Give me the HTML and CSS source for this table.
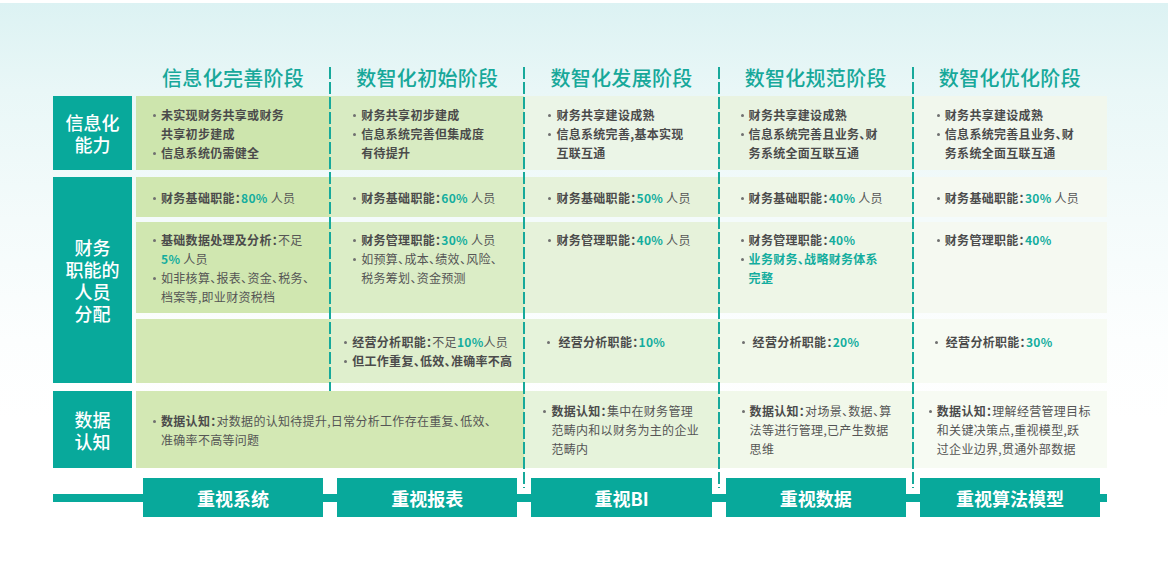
FILE: index.html
```html
<!DOCTYPE html>
<html lang="zh-CN">
<head>
<meta charset="utf-8">
<title>数智化阶段</title>
<link rel="stylesheet" href="styles.css">
</head>
<body>
<div class="page">
  <div class="board">
    <div class="hd c1">信息化完善阶段</div>
    <div class="hd c2">数智化初始阶段</div>
    <div class="hd c3">数智化发展阶段</div>
    <div class="hd c4">数智化规范阶段</div>
    <div class="hd c5">数智化优化阶段</div>

    <div class="lab r1">信息化<br>能力</div>
    <div class="lab r2">财务<br>职能的<br>人员<br>分配</div>
    <div class="lab r3">数据<br>认知</div>

    <!-- row 1 -->
    <div class="cell r1 c1 mid strong">
      <p class="it"><span>未实现财务共享或财务<br>共享初步建成</span></p>
      <p class="it"><span>信息系统仍需健全</span></p>
    </div>
    <div class="cell r1 c2 mid strong">
      <p class="it"><span>财务共享初步建成</span></p>
      <p class="it"><span>信息系统完善但集成度<br>有待提升</span></p>
    </div>
    <div class="cell r1 c3 mid strong">
      <p class="it"><span>财务共享建设成熟</span></p>
      <p class="it"><span>信息系统完善,基本实现<br>互联互通</span></p>
    </div>
    <div class="cell r1 c4 mid strong">
      <p class="it"><span>财务共享建设成熟</span></p>
      <p class="it"><span>信息系统完善且业务、财<br>务系统全面互联互通</span></p>
    </div>
    <div class="cell r1 c5 mid strong">
      <p class="it"><span>财务共享建设成熟</span></p>
      <p class="it"><span>信息系统完善且业务、财<br>务系统全面互联互通</span></p>
    </div>

    <!-- row 2a -->
    <div class="cell r2a c1 mid"><p class="it"><span><b>财务基础职能：</b><em>80%</em> 人员</span></p></div>
    <div class="cell r2a c2 mid"><p class="it"><span><b>财务基础职能：</b><em>60%</em> 人员</span></p></div>
    <div class="cell r2a c3 mid"><p class="it"><span><b>财务基础职能：</b><em>50%</em> 人员</span></p></div>
    <div class="cell r2a c4 mid"><p class="it"><span><b>财务基础职能：</b><em>40%</em> 人员</span></p></div>
    <div class="cell r2a c5 mid"><p class="it"><span><b>财务基础职能：</b><em>30%</em> 人员</span></p></div>

    <!-- row 2b -->
    <div class="cell r2b c1 top8">
      <p class="it"><span><b>基础数据处理及分析：</b>不足<br><em>5%</em> 人员</span></p>
      <p class="it"><span>如非核算、报表、资金、税务、<br>档案等,即业财资税档</span></p>
    </div>
    <div class="cell r2b c2 top8">
      <p class="it"><span><b>财务管理职能：</b><em>30%</em> 人员</span></p>
      <p class="it"><span>如预算、成本、绩效、风险、<br>税务筹划、资金预测</span></p>
    </div>
    <div class="cell r2b c3 top8">
      <p class="it"><span><b>财务管理职能：</b><em>40%</em> 人员</span></p>
    </div>
    <div class="cell r2b c4 top8">
      <p class="it"><span><b>财务管理职能：</b><em>40%</em></span></p>
      <p class="it"><span><em>业务财务、战略财务体系<br>完整</em></span></p>
    </div>
    <div class="cell r2b c5 top8">
      <p class="it"><span><b>财务管理职能：</b><em>40%</em></span></p>
    </div>

    <!-- row 2c -->
    <div class="cell r2c c1"></div>
    <div class="cell r2c c2 top13 pl14">
      <p class="it"><span><b>经营分析职能：</b>不足<em>10%</em>人员</span></p>
      <p class="it"><span><b>但工作重复、低效、准确率不高</b></span></p>
    </div>
    <div class="cell r2c c3 top13 wide"><p class="it"><span><b>经营分析职能：</b><em>10%</em></span></p></div>
    <div class="cell r2c c4 top13 wide"><p class="it"><span><b>经营分析职能：</b><em>20%</em></span></p></div>
    <div class="cell r2c c5 top13 wide"><p class="it"><span><b>经营分析职能：</b><em>30%</em></span></p></div>

    <!-- row 3 -->
    <div class="cell r3 m12 mid">
      <p class="it"><span><b>数据认知：</b>对数据的认知待提升,日常分析工作存在重复、低效、<br>准确率不高等问题</span></p>
    </div>
    <div class="cell r3 c3 mid pl19">
      <p class="it"><span><b>数据认知：</b>集中在财务管理<br>范畴内和以财务为主的企业<br>范畴内</span></p>
    </div>
    <div class="cell r3 c4 mid pl23">
      <p class="it"><span><b>数据认知：</b>对场景、数据、算<br>法等进行管理,已产生数据<br>思维</span></p>
    </div>
    <div class="cell r3 c5 mid pl16">
      <p class="it"><span><b>数据认知：</b>理解经营管理目标<br>和关键决策点,重视模型,跃<br>过企业边界,贯通外部数据</span></p>
    </div>

    <!-- dashed dividers -->
    <div class="dl x2 short"></div>
    <div class="dl x3"></div>
    <div class="dl x4"></div>
    <div class="dl x5"></div>

    <!-- bottom -->
    <div class="bar"></div>
    <div class="btn c1">重视系统</div>
    <div class="btn c2">重视报表</div>
    <div class="btn c3">重视BI</div>
    <div class="btn c4">重视数据</div>
    <div class="btn c5">重视算法模型</div>
  </div>
</div>
</body>
</html>
```

FILE: styles.css
```css
* { box-sizing: border-box; }
html, body { margin: 0; padding: 0; }
body {
  width: 1168px;
  height: 572px;
  overflow: hidden;
  font-family: "Noto Sans CJK SC", "Noto Sans", sans-serif;
  background: #fff;
}
.page {
  width: 1168px;
  height: 572px;
  padding: 58px 0 0 53px;
  background: linear-gradient(to bottom, #fff 0, #fff 3px, #dcf2f3 3px, #e9f7f7 90px, #f4fbfb 220px, #fcfefe 340px, #fff 420px);
}
.board {
  display: grid;
  width: 1054px;
  grid-template-columns: 79px 4px repeat(5, 1fr);
  grid-template-rows: 38px 74px 7px 40px 5px 91px 6px 64px 8px 77px 10px 39px;
}

/* column / row placement */
.c1 { grid-column: 3; }
.c2 { grid-column: 4; }
.c3 { grid-column: 5; }
.c4 { grid-column: 6; }
.c5 { grid-column: 7; }
.m12 { grid-column: 3 / 5; }
.r1 { grid-row: 2; }
.r2a { grid-row: 4; }
.r2b { grid-row: 6; }
.r2c { grid-row: 8; }
.r3 { grid-row: 10; }

/* headers */
.hd {
  grid-row: 1;
  display: flex;
  align-items: center;
  justify-content: center;
  font-size: 20px;
  font-weight: 500;
  letter-spacing: 0.3px;
  color: #17a89a;
}

/* left labels */
.lab {
  grid-column: 1;
  background: #08a99b;
  color: #fff;
  font-size: 18px;
  font-weight: 500;
  line-height: 22px;
  display: flex;
  align-items: center;
  justify-content: center;
  text-align: center;
}
.lab.r2 { grid-row: 4 / 9; }

/* content cells */
.cell {
  display: flex;
  flex-direction: column;
  font-size: 12px;
  line-height: 19px;
  letter-spacing: 0.3px;
  color: #555;
  white-space: nowrap;
  font-feature-settings: "halt";
}
.cell p { margin: 0; }
.mid { justify-content: center; }
.top8 { padding-top: 8px; }
.top13 { padding-top: 13px; }

.cell.c1 { background: #d0e7b0; padding-left: 17px; }
.cell.c2 { background: #dbedc6; padding-left: 23px; }
.cell.c3 { background: #e6f2da; padding-left: 24px; }
.cell.c4 { background: #eef6e7; padding-left: 22px; }
.cell.c5 { background: #f5f9f1; padding-left: 24px; }

.cell.r1.c1 { background: #cde5ad; }
.cell.r1.c2 { background: #d8ebc2; }
.cell.r1.c3 { background: #ebf5e7; }
.cell.r1.c4 { background: #e9f3e1; }
.cell.r1.c5 { background: #f1f7ed; }

.cell.r2c.c1, .cell.m12 { background: #d3e8b4; }
.cell.r2c.c2 { background: #dfefcd; }
.cell.r2c.c3, .cell.r3.c3 { background: #e6f3db; }
.cell.r2c.c4, .cell.r3.c4 { background: #f1f8ea; }
.cell.r2c.c5, .cell.r3.c5 { background: #f7fbf3; }

.cell.m12 { padding-left: 17px; }
.cell.pl14 { padding-left: 14px; }
.cell.pl16 { padding-left: 16px; }
.cell.pl19 { padding-left: 19px; }
.cell.pl23 { padding-left: 23px; }
.cell.wide { padding-left: 23px; }
.cell.wide.c5 { padding-left: 22px; }

.it {
  display: flex;
  align-items: flex-start;
}
.it::before {
  content: "";
  flex: none;
  width: 3px;
  height: 3px;
  border-radius: 50%;
  background: #707070;
  margin: 9px 5px 0 0;
}
.wide .it::before { margin-right: 8px; }

.strong { color: #4b4b4b; font-weight: 700; }
.cell b { font-weight: 700; color: #4b4b4b; }
.cell em { font-style: normal; font-weight: 700; color: #13ad9e; }

/* dashed dividers */
.dl {
  grid-row: 1 / 13;
  justify-self: start;
  width: 2px;
  margin: 9px 0 29px -1px;
  background: repeating-linear-gradient(to bottom, #17a99b 0, #17a99b 12px, transparent 12px, transparent 15px);
}
.dl.short { grid-row: 1 / 10; margin-bottom: 0; }
.x2 { grid-column: 4; }
.x3 { grid-column: 5; }
.x4 { grid-column: 6; }
.x5 { grid-column: 7; }

/* bottom bar */
.bar {
  grid-column: 1 / -1;
  grid-row: 12;
  align-self: center;
  height: 8px;
  background: #08a99b;
}
.btn {
  grid-row: 12;
  margin: 0 7px;
  background: #08a99b;
  color: #fff;
  font-size: 18px;
  font-weight: 700;
  display: flex;
  align-items: center;
  justify-content: center;
}
```
